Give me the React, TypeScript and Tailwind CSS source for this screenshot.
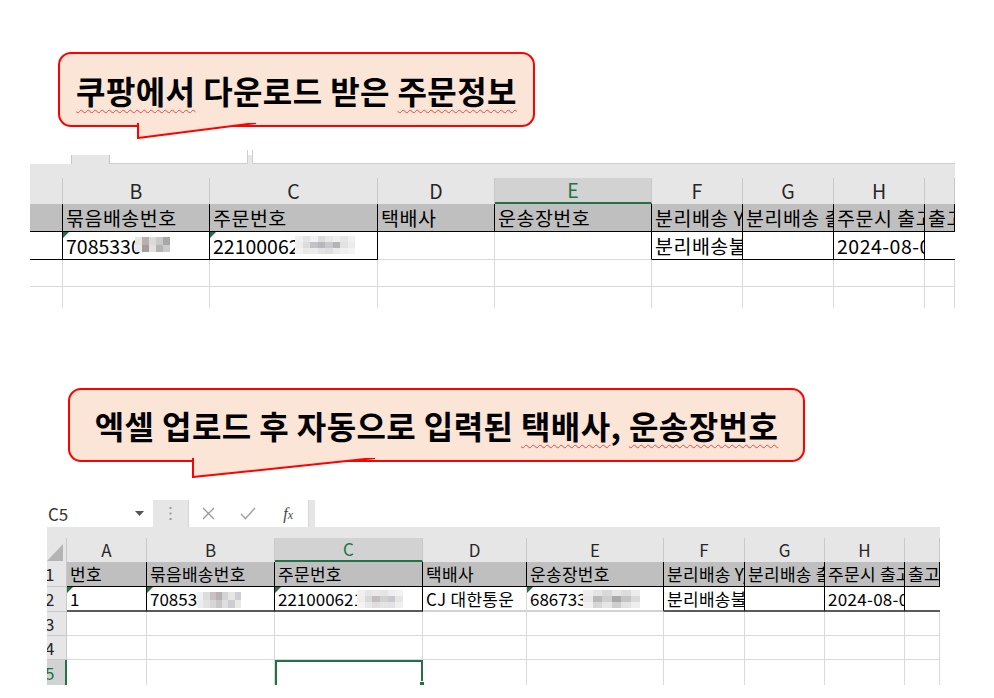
import React from "react";

type CellDef = {
  w: string;
  cls: string;
  t?: React.ReactNode;
  tri?: boolean;
  extra?: React.ReactNode;
};

const Tri = () => (
  <span className="absolute left-0 top-0 h-0 w-0 border-t-[6px] border-r-[6px] border-t-[#1e7145] border-r-transparent" />
);

function Row({ cells, h }: { cells: CellDef[]; h: string }) {
  return (
    <div className={`flex ${h}`}>
      {cells.map((c, i) => (
        <div
          key={i}
          className={`relative flex shrink-0 items-center overflow-hidden whitespace-nowrap ${c.w} ${c.cls}`}
        >
          {c.tri && <Tri />}
          {c.t}
          {c.extra}
        </div>
      ))}
    </div>
  );
}

// blurred part of the numbers
function Mosaic({ className, rows }: { className: string; rows: string[][] }) {
  return (
    <div className={`absolute flex flex-col ${className}`}>
      {rows.map((r, i) => (
        <div key={i} className="flex flex-1">
          {r.map((c, j) => (
            <span key={j} className="flex-1" style={{ backgroundColor: c }} />
          ))}
        </div>
      ))}
    </div>
  );
}

const Squiggle = ({ children }: { children: React.ReactNode }) => (
  <span className="underline decoration-wavy decoration-[#e5484d] decoration-1 underline-offset-[5px]">
    {children}
  </span>
);

/* ---------------- top sheet ---------------- */

const W1 = ["w-[33px]", "w-[147px]", "w-[168px]", "w-[117px]", "w-[157px]", "w-[91px]", "w-[91px]", "w-[91px]", "w-[30px]"];
const LETTERS1 = ["", "B", "C", "D", "E", "F", "G", "H", ""];
const HEAD1 = ["", "묶음배송번호", "주문번호", "택배사", "운송장번호", "분리배송 Y/N", "분리배송 출고", "주문시 출고예정일", "출고일"];

const hdr = "justify-center bg-[#e6e6e6] border-r border-r-[#c8c8c8] text-[#262626] tracking-normal";
const hdrSel = "justify-center bg-[#d2d2d2] border-r border-r-[#c8c8c8] border-b-2 border-b-[#217346] text-[#217346] tracking-normal";
const grid = "border-r border-b border-[#d9d9d9]";

function TopSheet() {
  const letters: CellDef[] = LETTERS1.map((l, i) => ({
    w: W1[i],
    cls: i === 4 ? hdrSel : hdr,
    t: l,
  }));
  const head: CellDef[] = HEAD1.map((t, i) => ({
    w: W1[i],
    cls: "bg-[#bfbfbf] border-r border-b border-black pl-[3px]",
    t,
  }));
  const r2: CellDef[] = [
    { w: W1[0], cls: "border-r border-b border-black" },
    {
      w: W1[1],
      cls: "border-r border-b border-black pl-[3px] tracking-normal",
      tri: true,
      t: "7085330",
      extra: (
        <Mosaic
          className="left-[72px] top-[5px] h-[15px] w-[35px]"
          rows={[
            ["#e6e6e6", "#b8afaf", "#dadada", "#c9c9c9", "#a8a8a8"],
            ["#ebebeb", "#a69c9c", "#e1e1e1", "#b4b4b4", "#cbcbcb"],
          ]}
        />
      ),
    },
    {
      w: W1[2],
      cls: "border-r border-b border-black pl-[3px] tracking-normal",
      tri: true,
      t: "22100062",
      extra: (
        <Mosaic
          className="left-[85px] top-[4px] h-[18px] w-[60px]"
          rows={[
            ["#f0f0f0", "#e4e4e4", "#f2f2f2", "#dcdce0", "#e8e8e8", "#f0f0f0", "#e6e6e6", "#f1f1f1"],
            ["#eeeeee", "#dcdcdc", "#c2c2c6", "#b8b8bc", "#c9c9cd", "#b5b5b9", "#e2e2e2", "#ececec"],
            ["#f3f3f3", "#e9e9e9", "#ececec", "#e2e2e2", "#dedee2", "#eaeaea", "#f0f0f0", "#f4f4f4"],
          ]}
        />
      ),
    },
    { w: W1[3], cls: grid },
    { w: W1[4], cls: "border-r border-r-black border-b border-b-[#d9d9d9]" },
    { w: W1[5], cls: "border-r border-b border-black pl-[3px]", t: "분리배송불가" },
    { w: W1[6], cls: "border-r border-b border-black" },
    { w: W1[7], cls: "border-r border-b border-black pl-[3px]", t: "2024-08-04" },
    { w: W1[8], cls: "border-b border-black" },
  ];
  const blank = (last: boolean): CellDef[] =>
    W1.map((w) => ({ w, cls: last ? "border-r border-[#d9d9d9]" : grid }));

  return (
    <div className="ml-[30px] mt-[23px] w-[925px] text-[19.5px] tracking-[0.5px] text-black">
      {/* bottom edge of the formula bar */}
      <div className="flex h-[14px]">
        <div className="w-[41px] bg-white" />
        <div className="mt-[5px] w-[39px] border-x border-[#c6c6c6] bg-[#e6e6e6]" />
        <div className="w-[138px] border-r border-b border-[#cfcfcf] bg-white" />
        <div className="mt-[5px] w-[4px] bg-[#e6e6e6]" />
        <div className="flex-1 border-l border-b border-[#cfcfcf] bg-white" />
      </div>
      <div className="h-[14px] bg-[#e6e6e6]" />
      <Row h="h-[26px]" cells={letters} />
      <Row h="h-[28px]" cells={head} />
      <Row h="h-[28px]" cells={r2} />
      <Row h="h-[27px]" cells={blank(false)} />
      <Row h="h-[21px]" cells={blank(true)} />
    </div>
  );
}

/* ---------------- bottom sheet ---------------- */

const W2 = ["w-[80px]", "w-[128px]", "w-[148px]", "w-[104px]", "w-[137px]", "w-[81px]", "w-[80px]", "w-[80px]", "w-[35px]"];
const LETTERS2 = ["A", "B", "C", "D", "E", "F", "G", "H", ""];
const HEAD2 = ["번호", "묶음배송번호", "주문번호", "택배사", "운송장번호", "분리배송 Y/N", "분리배송 출고", "주문시 출고예정일", "출고일"];

const rowHdr = "w-[20px] bg-[#e6e6e6] border-r border-b border-[#c8c8c8] text-[#262626]";

function RowNum({ n }: { n: string }) {
  return <span className="-ml-[2px]">{n}</span>;
}

function FormulaBar() {
  return (
    <>
      <div className="flex h-[27px] bg-[#e6e6e6] tracking-normal">
        <div className="flex w-[106px] items-center bg-white pl-[1px] text-[17px] text-[#333]">
          C5
          <svg className="ml-auto mr-[9px]" width="9" height="5" viewBox="0 0 9 5">
            <path d="M0 0h9L4.5 5z" fill="#555" />
          </svg>
        </div>
        <div className="flex w-[35px] items-center justify-center">
          <svg width="3" height="13" viewBox="0 0 3 13">
            <rect x="0.5" y="0" width="2" height="2" fill="#9a9a9a" />
            <rect x="0.5" y="5.5" width="2" height="2" fill="#9a9a9a" />
            <rect x="0.5" y="11" width="2" height="2" fill="#9a9a9a" />
          </svg>
        </div>
        <div className="grid w-[121px] grid-cols-3 items-center justify-items-center border-x border-[#d6d6d6] bg-white">
          <svg width="13" height="13" viewBox="0 0 13 13">
            <path d="M1 1l11 11M12 1L1 12" stroke="#9c9c9c" strokeWidth="1.4" />
          </svg>
          <svg width="16" height="13" viewBox="0 0 16 13">
            <path d="M1 7l4.5 4.5L15 1" stroke="#a8a8a8" strokeWidth="1.6" fill="none" />
          </svg>
          <span className="font-['Liberation_Serif',serif] text-[16px] italic leading-none text-[#444]">
            f<span className="text-[12px]">x</span>
          </span>
        </div>
        <div className="w-[6px]" />
        <div className="flex-1 bg-white" />
      </div>
      <div className="h-[11px] bg-[#e6e6e6]" />
    </>
  );
}

function BottomSheet() {
  const letters: CellDef[] = [
    {
      w: "w-[20px]",
      cls: "bg-[#e6e6e6] border-r border-[#c8c8c8]",
      extra: (
        <svg className="absolute bottom-[1px] right-[3px]" width="16" height="17" viewBox="0 0 16 17">
          <path d="M16 0V17H0z" fill="#b4b4b4" />
        </svg>
      ),
    },
    ...LETTERS2.map((l, i) => ({ w: W2[i], cls: i === 2 ? hdrSel : hdr, t: l })),
  ];
  const head: CellDef[] = [
    { w: "w-[20px]", cls: rowHdr, t: <RowNum n="1" /> },
    ...HEAD2.map((t, i) => ({
      w: W2[i],
      cls: "bg-[#bfbfbf] border-r border-b border-black pl-[3px]",
      t,
    })),
  ];
  const dark = "border-r border-r-black border-b-2 border-b-[#5a5a5a] pl-[3px]";
  const darkNum = "border-r border-r-black border-b-2 border-b-[#5a5a5a] pl-[3px] tracking-normal";
  const r2: CellDef[] = [
    { w: "w-[20px]", cls: rowHdr, t: <RowNum n="2" /> },
    { w: W2[0], cls: darkNum, tri: true, t: "1" },
    {
      w: W2[1],
      cls: darkNum,
      tri: true,
      t: "708533",
      extra: (
        <Mosaic
          className="left-[50px] top-[5px] h-[16px] w-[44px]"
          rows={[
            ["#f1f1f1", "#dcdcdc", "#c9c1c1", "#b9b1b1", "#d3d3d3", "#e6e6e6", "#cfcfd3"],
            ["#ececec", "#e2e2e2", "#d6d6d6", "#c7c7c7", "#dedede", "#cdcdd1", "#e9e9e9"],
          ]}
        />
      ),
    },
    {
      w: W2[2],
      cls: darkNum,
      tri: true,
      t: "221000621",
      extra: (
        <Mosaic
          className="left-[82px] top-[3px] h-[18px] w-[46px]"
          rows={[
            ["#f0f0f0", "#e5e5e5", "#e9e9e9", "#e4e4e4", "#eeeeee", "#f2f2f2"],
            ["#eeeeee", "#d9d9d9", "#c3bdbd", "#d1d1d1", "#c9c9cd", "#e6e6e6"],
            ["#f3f3f3", "#e8e8e8", "#dedede", "#e4e4e4", "#e2e2e6", "#efefef"],
          ]}
        />
      ),
    },
    { w: W2[3], cls: "border-r border-r-[#d9d9d9] border-b-2 border-b-[#d2d2d2] pl-[3px]", t: "CJ 대한통운" },
    {
      w: W2[4],
      cls: "border-r border-r-black border-b-2 border-b-[#d2d2d2] pl-[3px] tracking-normal",
      tri: true,
      t: "6867339",
      extra: (
        <Mosaic
          className="left-[56px] top-[3px] h-[18px] w-[57px]"
          rows={[
            ["#eeeeee", "#e4e4e4", "#d8d8d8", "#e6e6e6", "#dcdcdc", "#ececec"],
            ["#e8e8e8", "#b9b9b9", "#cfcfcf", "#a9a9a9", "#c4c4c4", "#dadada"],
            ["#f0f0f0", "#d6d6d6", "#e6e6e6", "#cdcdcd", "#e2e2e2", "#eeeeee"],
          ]}
        />
      ),
    },
    { w: W2[5], cls: dark, t: "분리배송불가" },
    { w: W2[6], cls: dark },
    { w: W2[7], cls: dark, t: "2024-08-04" },
    { w: W2[8], cls: "border-b-2 border-b-[#5a5a5a]" },
  ];
  const blank = (n: string): CellDef[] => [
    { w: "w-[20px]", cls: rowHdr, t: <RowNum n={n} /> },
    ...W2.map((w) => ({ w, cls: grid })),
  ];
  const r5: CellDef[] = [
    {
      w: "w-[20px]",
      cls: "w-[20px] bg-[#d2d2d2] border-r-2 border-r-[#217346] text-[#217346]",
      t: <RowNum n="5" />,
    },
    ...W2.map((w, i) => ({
      w,
      cls:
        i === 2
          ? "overflow-visible border-2 border-b-0 border-[#217346]"
          : "border-r border-[#d9d9d9]",
      extra:
        i === 2 ? (
          <span className="absolute -right-[4px] bottom-0 h-[4px] w-[6px] border border-b-0 border-white bg-[#217346]" />
        ) : undefined,
    })),
  ];

  return (
    <div className="ml-[47px] mt-[38px] w-[893px] text-[17px] tracking-[0.3px] text-black">
      <FormulaBar />
      <Row h="h-[24px]" cells={letters} />
      <Row h="h-[25px]" cells={head} />
      <Row h="h-[25px]" cells={r2} />
      <Row h="h-[24px]" cells={blank("3")} />
      <Row h="h-[24px]" cells={blank("4")} />
      <Row h="h-[25px]" cells={r5} />
    </div>
  );
}

export default function App() {
  return (
    <div className="h-[698px] w-[994px] overflow-hidden bg-white font-['Noto_Sans_CJK_KR',sans-serif]">
      {/* callout 1 */}
      <div className="pl-[58px] pt-[52px]">
        <div className="relative flex h-[75px] w-[477px] items-center justify-center rounded-[13px] border-2 border-[#ff0000] bg-[#fbe5d6] text-[32px] font-bold tracking-[0.4px] text-black">
          <span>
            <Squiggle>쿠팡에서</Squiggle> 다운로드 받은 <Squiggle>주문정보</Squiggle>
          </span>
          <svg className="absolute left-[77px] top-[calc(100%-2px)]" width="120" height="16" viewBox="0 0 120 16">
            <polygon points="1,0 1,15 119,0" fill="#fbe5d6" />
            <polyline points="1,0 1,15 119,0" fill="none" stroke="#ff0000" strokeWidth="2" />
          </svg>
        </div>
      </div>

      <TopSheet />

      {/* callout 2 */}
      <div className="pl-[68px] pt-[80px]">
        <div className="relative flex h-[74px] w-[737px] items-center justify-center rounded-[13px] border-2 border-[#ff0000] bg-[#fbe5d6] text-[32px] font-bold tracking-[0.4px] text-black">
          <span>
            엑셀 업로드 후 자동으로 입력된 <Squiggle>택배사</Squiggle>, <Squiggle>운송장번호</Squiggle>
          </span>
          <svg className="absolute left-[122px] top-[calc(100%-2px)]" width="184" height="20" viewBox="0 0 184 20">
            <polygon points="1,0 1,19 183,0" fill="#fbe5d6" />
            <polyline points="1,0 1,19 183,0" fill="none" stroke="#ff0000" strokeWidth="2" />
          </svg>
        </div>
      </div>

      <BottomSheet />
    </div>
  );
}
